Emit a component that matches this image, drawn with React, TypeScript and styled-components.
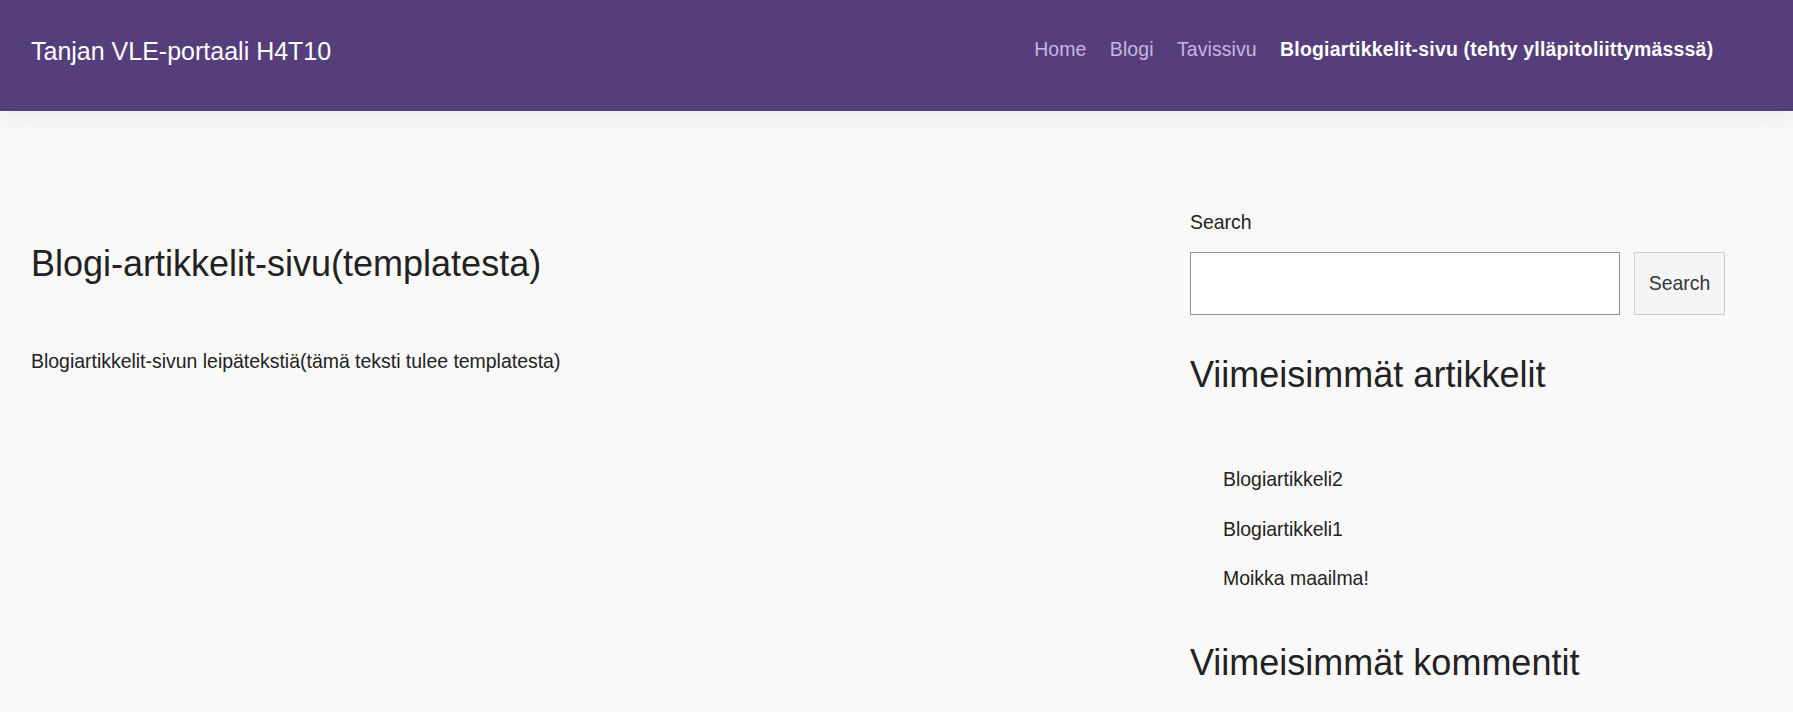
import React from "react";
import styled, { createGlobalStyle } from "styled-components";

const GlobalStyle = createGlobalStyle`
  html, body {
    margin: 0;
    padding: 0;
    background: #f9f9f9;
    color: #222222;
    font-family: "Liberation Sans", Arial, sans-serif;
    font-size: 19.44px;
    line-height: 1.5;
  }
  * { box-sizing: border-box; }
`;

const Header = styled.header`
  position: relative;
  z-index: 1;
  display: flex;
  align-items: center;
  justify-content: space-between;
  height: 111px;
  padding: 0 68px 10px 31px;
  background: #563d7c;
  box-shadow: 0 4px 26px rgba(0, 0, 0, 0.07);
`;

const SiteTitle = styled.a`
  color: #ffffff;
  font-size: 25px;
  line-height: 1.2;
  text-decoration: none;
`;

const Nav = styled.nav`
  display: flex;
  align-items: center;
  margin-bottom: 1px;
`;

const NavLink = styled.a<{ $current?: boolean }>`
  padding: 0 11.7px;
  color: ${(p) => (p.$current ? "#ffffff" : "#c8b6e4")};
  font-weight: ${(p) => (p.$current ? 700 : 400)};
  letter-spacing: ${(p) => (p.$current ? "0.2px" : "0.1px")};
  font-size: 19.44px;
  line-height: 1.5;
  text-decoration: none;
  white-space: nowrap;
`;

const Layout = styled.div`
  display: grid;
  grid-template-columns: 1fr 535px;
  column-gap: 40px;
  padding: 0 68px 0 31px;
`;

const Main = styled.main`
  padding-top: 131.3px;
`;

const PageTitle = styled.h1`
  margin: 0;
  font-size: 36px;
  font-weight: 400;
  line-height: 1.2;
`;

const Paragraph = styled.p`
  margin: 61.2px 0 0;
`;

const Sidebar = styled.aside`
  padding-top: 96.9px;
`;

const SearchLabel = styled.label`
  display: block;
  margin-bottom: 15.2px;
`;

const SearchRow = styled.div`
  display: flex;
  gap: 14px;
  height: 63px;
`;

const SearchInput = styled.input`
  flex: 1;
  min-width: 0;
  border: 1px solid #949494;
  background: #ffffff;
  font: inherit;
`;

const SearchButton = styled.button`
  width: 91px;
  border: 1px solid #cccccc;
  background: #f5f5f5;
  color: #32373c;
  font-family: inherit;
  font-size: 19.44px;
  padding: 0;
`;

const WidgetTitle = styled.h2<{ $top: number }>`
  margin: ${(p) => p.$top}px 0 0;
  font-size: 36px;
  font-weight: 400;
  line-height: 1.2;
`;

const PostList = styled.ul`
  list-style: none;
  margin: 68.5px 0 0;
  padding: 0 0 0 33px;
`;

const PostItem = styled.li`
  & + & {
    margin-top: 20.6px;
  }
`;

const PostLink = styled.a`
  color: #222222;
  text-decoration: none;
`;

export default function App() {
  return (
    <>
      <GlobalStyle />
      <Header>
        <SiteTitle href="#">Tanjan VLE-portaali H4T10</SiteTitle>
        <Nav>
          <NavLink href="#">Home</NavLink>
          <NavLink href="#">Blogi</NavLink>
          <NavLink href="#">Tavissivu</NavLink>
          <NavLink href="#" $current>
            Blogiartikkelit-sivu (tehty ylläpitoliittymässsä)
          </NavLink>
        </Nav>
      </Header>
      <Layout>
        <Main>
          <PageTitle>Blogi-artikkelit-sivu(templatesta)</PageTitle>
          <Paragraph>Blogiartikkelit-sivun leipätekstiä(tämä teksti tulee templatesta)</Paragraph>
        </Main>
        <Sidebar>
          <SearchLabel htmlFor="search">Search</SearchLabel>
          <SearchRow>
            <SearchInput id="search" type="search" />
            <SearchButton type="button">Search</SearchButton>
          </SearchRow>
          <WidgetTitle $top={37.9}>Viimeisimmät artikkelit</WidgetTitle>
          <PostList>
            <PostItem><PostLink href="#">Blogiartikkeli2</PostLink></PostItem>
            <PostItem><PostLink href="#">Blogiartikkeli1</PostLink></PostItem>
            <PostItem><PostLink href="#">Moikka maailma!</PostLink></PostItem>
          </PostList>
          <WidgetTitle $top={47.3}>Viimeisimmät kommentit</WidgetTitle>
        </Sidebar>
      </Layout>
    </>
  );
}
